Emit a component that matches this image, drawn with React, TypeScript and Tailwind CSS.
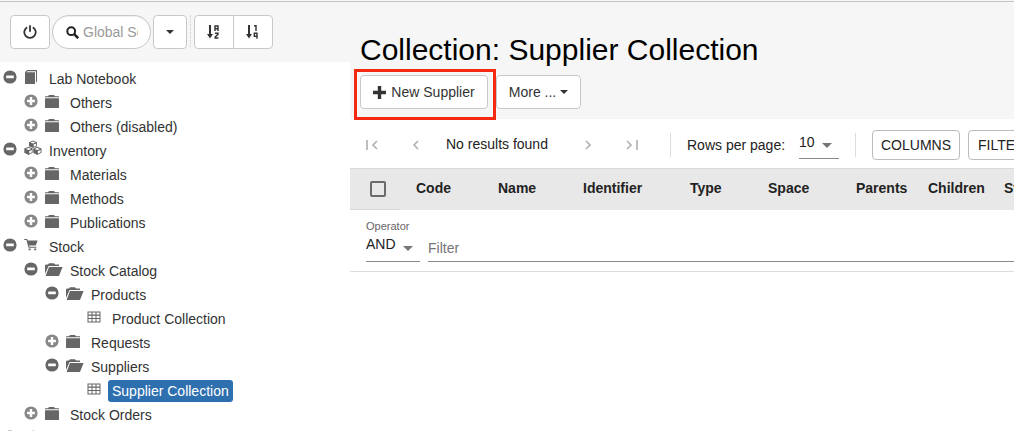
import type { ReactNode } from 'react';

function Icon({ children, size = 14, className = '' }: { children: ReactNode; size?: number; className?: string }) {
  return (
    <svg width={size} height={size} viewBox="0 0 14 14" fill="currentColor" aria-hidden="true" className={`shrink-0 ${className}`}>
      {children}
    </svg>
  );
}

const Minus = () => (
  <Icon><path fillRule="evenodd" d="M7 .4a6.6 6.6 0 1 0 0 13.2A6.6 6.6 0 0 0 7 .4ZM3.2 5.6h7.6v2.6H3.2Z" /></Icon>
);
const Plus = () => (
  <Icon><path fillRule="evenodd" d="M7 .4a6.6 6.6 0 1 0 0 13.2A6.6 6.6 0 0 0 7 .4ZM5.8 3.1h2.4v2.7h2.7v2.4H8.2v2.7H5.8V8.2H3.1V5.8h2.7Z" /></Icon>
);
const Folder = () => (
  <Icon><path d="M0 2.2h3L4 1h5l1 1.2h4v1H0ZM0 4.2h14V14H0Z" /></Icon>
);
const FolderOpen = () => (
  <svg width="18" height="14" viewBox="0 0 18 14" fill="currentColor" aria-hidden="true" className="shrink-0">
    <path d="M0 3.2 1 2.4h2L4 1.3h5l1 1.1h4v1.5H3.6L0 12ZM4 5h13.6L14 14H.6Z" />
  </svg>
);
const Book = () => (
  <Icon><path d="M1 2.4 3 0h10v11.5l-1 1V1.2H3.5L2.6 2.3H11V14H1Z" /></Icon>
);
const Cubes = () => (
  <svg width="18" height="16" viewBox="0 0 18 16" fill="currentColor" aria-hidden="true" className="-mt-[2px] shrink-0">
    <path d="m9 .5 4 1.8v4L9 8 5 6.3v-4ZM4.6 6.8l4 1.8v4.2l-4 2.2-4.3-2.2V8.6ZM13.2 6.8l4.3 1.8v4.2L13.2 15l-4-2.2V8.6Z" />
    <path fill="#fff" d="M9 1.4 11.6 2.5 9 3.6 6.4 2.5ZM4.6 7.8l2.6 1.1-2.6 1.2L2 8.9ZM13.2 7.8l2.7 1.1-2.7 1.2-2.6-1.2ZM9.7 4.6 12.2 3.5v2.2L9.7 6.8ZM5.3 11.1l2.5-1.2v2.4l-2.5 1.4ZM13.9 11.1l2.7-1.2v2.4l-2.7 1.4Z" />
  </svg>
);
const Cart = () => (
  <Icon><path d="M.2 1h3l.5 1.5h9.9l-1.8 5H5.1l.4 1.2h6.9v1H4.6L2.4 2H.2ZM4.6 10.6h2v1.7h-2ZM10.2 10.6h2v1.7h-2Z" /></Icon>
);
const Grid = () => (
  <Icon><path fillRule="evenodd" d="M.5 1.5h13v11H.5ZM1.5 2.5v2h3v-2Zm4 0v2h3v-2Zm4 0v2h3v-2Zm-8 3.2v2.3h3V5.7Zm4 0v2.3h3V5.7Zm4 0v2.3h3V5.7Zm-8 3.4v2.4h3V9.1Zm4 0v2.4h3V9.1Zm4 0v2.4h3V9.1Z" /></Icon>
);
const Wrench = () => (
  <Icon><path d="M9.5.5a4 4 0 0 0-3.6 5.4L.6 11.2l2.2 2.2 5.3-5.3A4 4 0 0 0 13.5 4l-2.4 1.4L9 4l.2-2.3Z" /></Icon>
);
const Caret = () => (
  <svg width="8" height="4" viewBox="0 0 8 4" fill="currentColor" aria-hidden="true"><path d="M0 0h8L4 4Z" /></svg>
);

type Node = { label: string; level: number; state?: 'open' | 'closed'; icon: ReactNode; selected?: boolean };

const nodes: Node[] = [
  { label: 'Lab Notebook', level: 0, state: 'open', icon: <Book /> },
  { label: 'Others', level: 1, state: 'closed', icon: <Folder /> },
  { label: 'Others (disabled)', level: 1, state: 'closed', icon: <Folder /> },
  { label: 'Inventory', level: 0, state: 'open', icon: <Cubes /> },
  { label: 'Materials', level: 1, state: 'closed', icon: <Folder /> },
  { label: 'Methods', level: 1, state: 'closed', icon: <Folder /> },
  { label: 'Publications', level: 1, state: 'closed', icon: <Folder /> },
  { label: 'Stock', level: 0, state: 'open', icon: <Cart /> },
  { label: 'Stock Catalog', level: 1, state: 'open', icon: <FolderOpen /> },
  { label: 'Products', level: 2, state: 'open', icon: <FolderOpen /> },
  { label: 'Product Collection', level: 3, icon: <Grid /> },
  { label: 'Requests', level: 2, state: 'closed', icon: <Folder /> },
  { label: 'Suppliers', level: 2, state: 'open', icon: <FolderOpen /> },
  { label: 'Supplier Collection', level: 3, icon: <Grid />, selected: true },
  { label: 'Stock Orders', level: 1, state: 'closed', icon: <Folder /> },
  { label: 'Utilities', level: 0, state: 'open', icon: <Wrench /> },
];

const indents = ['pl-[3px]', 'pl-6', 'pl-[45px]', 'pl-[66px]'];

function TreeRow({ node }: { node: Node }) {
  return (
    <li className={`flex h-6 ${indents[node.level]}`}>
      {node.state ? (
        <button
          aria-label={`${node.state === 'open' ? 'Collapse' : 'Expand'} ${node.label}`}
          className={`mt-[3px] size-[14px] ${node.state === 'open' ? 'text-[#666]' : 'text-[#888]'}`}
        >
          {node.state === 'open' ? <Minus /> : <Plus />}
        </button>
      ) : (
        <span className="w-[14px]" />
      )}
      <span className="ml-[7px] flex h-5 w-[18px] items-center text-[#666]">{node.icon}</span>
      <a
        href="#"
        className={`mt-[1px] ml-[3px] h-[22px] rounded-[3px] px-1 leading-[22px] ${node.selected ? 'bg-[#2e6fb0] text-white' : 'text-[#333]'}`}
      >
        {node.label}
      </a>
    </li>
  );
}

const btn = 'flex h-[34px] shrink-0 items-center justify-center border border-[#c8c8c8] bg-white text-[#333]';

function SortIcon({ top, bottom }: { top: string; bottom: string }) {
  return (
    <svg width="14" height="16" viewBox="0 0 14 16" fill="none" stroke="currentColor" aria-hidden="true">
      <path strokeWidth="2" d="M3 1v10" />
      <path fill="currentColor" stroke="none" d="M0 10h6l-3 4.5Z" />
      <path strokeWidth="1.4" d={top} />
      <path strokeWidth="1.4" d={bottom} />
    </svg>
  );
}

function Sidebar() {
  return (
    <aside className="flex w-[350px] shrink-0 flex-col">
      <div className="flex h-[60px] shrink-0 bg-[#f6f6f6] pt-[13px] pl-[10px]">
        <button aria-label="Log out" className={`${btn} w-10 rounded`}>
          <svg width="14" height="14" viewBox="0 0 14 14" fill="none" stroke="currentColor" strokeWidth="1.8" aria-hidden="true">
            <path d="M4.2 2.2a5.7 5.7 0 1 0 5.6 0M7 .3v6.5" />
          </svg>
        </button>
        <label className="ml-[2px] flex h-[34px] w-[99px] items-center rounded-full border border-[#c8c8c8] bg-white pr-3 pl-[13px] shadow-[inset_0_1px_1px_#0001]">
          <svg width="13" height="13" viewBox="0 0 13 13" fill="none" stroke="#222" aria-hidden="true" className="shrink-0">
            <circle cx="5.2" cy="5.2" r="3.9" strokeWidth="2" />
            <path strokeWidth="2.6" d="m8.2 8.2 4 4" />
          </svg>
          <input aria-label="Global Search" placeholder="Global Search" className="ml-1 w-full min-w-0 bg-transparent outline-none placeholder:text-[#999]" />
        </label>
        <button aria-label="Search options" className={`${btn} ml-[2px] w-[34px] rounded`}><Caret /></button>
        <span className="mx-[3px] h-8 border-l border-dotted border-[#ccc]" />
        <button aria-label="Sort alphabetically" className={`${btn} w-10 rounded-l`}>
          <SortIcon top="M8 7V2h3v5M8 4.8h3" bottom="M8 9.2h3v1L8.2 13v1H11.4" />
        </button>
        <button aria-label="Sort by order" className={`${btn} -ml-px w-10 rounded-r`}>
          <SortIcon top="M8 1.7h2V7" bottom="M11 14.8V9.2H8.3v3H11" />
        </button>
      </div>
      <ul className="pt-[5px]">
        {nodes.map((n) => <TreeRow key={n.label} node={n} />)}
      </ul>
    </aside>
  );
}

const navIcons = {
  first: 'M1 1v10M11 2 7 6l4 4',
  prev: 'M8 2 4 6l4 4',
  next: 'm4 2 4 4-4 4',
  last: 'm1 2 4 4-4 4M11 1v10',
};

function NavButton({ label, d, className = '' }: { label: string; d: string; className?: string }) {
  return (
    <button aria-label={label} className={`shrink-0 text-[#b0b0b0] ${className}`}>
      <svg width="12" height="12" viewBox="0 0 12 12" fill="none" stroke="currentColor" strokeWidth="1.6" aria-hidden="true"><path d={d} /></svg>
    </button>
  );
}

function Select({ label, id, options, className }: { label: string; id: string; options: string[]; className: string }) {
  return (
    <span className={`relative block shrink-0 border-b border-[#888] ${className}`}>
      <select id={id} aria-label={label} className="block h-full w-full appearance-none bg-transparent pb-[6px] text-[#222] outline-none">
        {options.map((o) => <option key={o}>{o}</option>)}
      </select>
      <svg width="10" height="5" viewBox="0 0 10 5" fill="#757575" aria-hidden="true" className="pointer-events-none absolute right-[7px] bottom-[10px]"><path d="M0 0h10L5 5Z" /></svg>
    </span>
  );
}

const columns = [
  { name: 'Code', width: 'w-[82px]' },
  { name: 'Name', width: 'w-[85px]' },
  { name: 'Identifier', width: 'w-[107px]' },
  { name: 'Type', width: 'w-[78px]' },
  { name: 'Space', width: 'w-[88px]' },
  { name: 'Parents', width: 'w-[72px]' },
  { name: 'Children', width: 'w-[76px]' },
  { name: 'Storage', width: 'w-[100px]' },
];

const outlined = 'h-[30px] shrink-0 rounded border border-[#bbb] px-[9px] text-[#222]';

export default function App() {
  return (
    <div className="flex h-screen flex-col overflow-hidden bg-white font-['Liberation_Sans',Arial,sans-serif] text-sm">
      <div className="h-[2px] shrink-0 border-b border-[#c4c4c4] bg-[#f6f6f6]" />
      <div className="flex min-h-0 grow">
        <Sidebar />
        <main className="min-w-0 grow overflow-hidden">
          <header className="h-[117px] bg-[#f6f6f6] pt-[30px] pl-[10px]">
            <h1 className="text-[30px] leading-9 text-black">Collection: Supplier Collection</h1>
            <div className="mt-[7px] flex gap-2">
              <div className="relative">
                <button className={`${btn} w-32 gap-[5px] rounded`}>
                  <svg width="13" height="13" viewBox="0 0 13 13" fill="currentColor" aria-hidden="true"><path d="M4.8 0h3.4v4.8H13v3.4H8.2V13H4.8V8.2H0V4.8h4.8Z" /></svg>
                  New Supplier
                </button>
                <span className="pointer-events-none absolute -top-[6px] -right-2 -bottom-[11px] -left-[6px] border-[3px] border-[#f5290f]" />
              </div>
              <button className={`${btn} w-[85px] gap-1 rounded`}>More ... <Caret /></button>
            </div>
          </header>
          <div className="flex h-[49px] items-center pt-[3px] whitespace-nowrap text-[#222]">
            <NavButton label="First page" d={navIcons.first} className="ml-4" />
            <NavButton label="Previous page" d={navIcons.prev} className="ml-8" />
            <span className="ml-6 w-[105px] shrink-0 pb-[3px]">No results found</span>
            <NavButton label="Next page" d={navIcons.next} className="ml-[31px]" />
            <NavButton label="Last page" d={navIcons.last} className="ml-8" />
            <span className="ml-8 h-6 shrink-0 border-l border-[#ddd]" />
            <label htmlFor="rows" className="ml-4 w-[101px] shrink-0">Rows per page:</label>
            <Select id="rows" label="Rows per page" options={['10', '25', '50']} className="ml-[11px] h-7 w-10" />
            <span className="mx-4 h-6 shrink-0 border-l border-[#ddd]" />
            <button className={`${outlined} w-[88px]`}><span className="flex justify-center">COLUMNS</span></button>
            <button className={`${outlined} ml-2`}>FILTERS</button>
          </div>
          <table className="w-full min-w-[738px] table-fixed border-collapse text-left">
            <thead>
              <tr className="h-[41px] border-t border-[#d8d8d8] bg-[#e8e8e8]">
                <th className="w-[50px] border-b border-[#d8d8d8] pl-5">
                  <input type="checkbox" aria-label="Select all rows" className="block size-4 appearance-none rounded-[2px] border-2 border-[#6b6b6b]" />
                </th>
                {columns.map((c) => (
                  <th key={c.name} className={`${c.width} pb-[3px] pl-4 font-bold text-[#222]`}>{c.name}</th>
                ))}
              </tr>
            </thead>
            <tbody>
              <tr className="h-[62px] border-b border-[#ddd]">
                <td colSpan={9} className="pl-4">
                  <div className="flex items-end gap-2">
                    <div className="w-[54px]">
                      <label htmlFor="operator" className="block text-[11px] leading-[14px] text-[#666]">Operator</label>
                      <Select id="operator" label="Operator" options={['AND', 'OR']} className="h-[29px]" />
                    </div>
                    <input aria-label="Filter" placeholder="Filter" className="h-7 min-w-0 grow border-b border-[#888] bg-transparent outline-none placeholder:text-[#757575]" />
                  </div>
                </td>
              </tr>
            </tbody>
          </table>
        </main>
      </div>
    </div>
  );
}
